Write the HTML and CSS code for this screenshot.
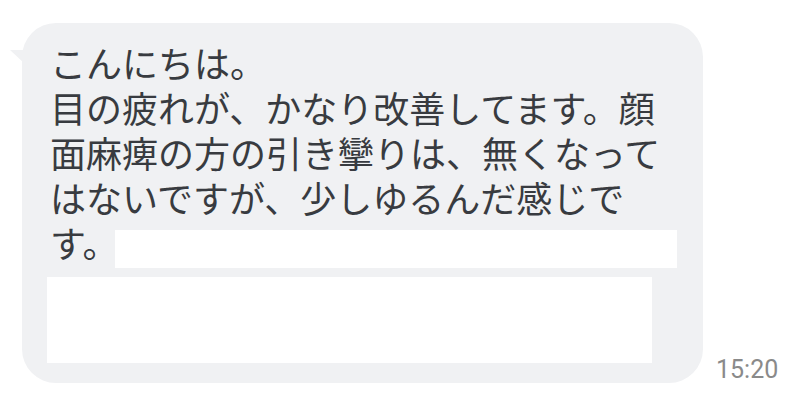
FILE: index.html
```html
<!DOCTYPE html>
<html lang="ja">
<head>
<meta charset="utf-8">
<link rel="stylesheet" href="styles.css">
</head>
<body>
<div class="row">
  <div class="bubble">
    <div class="line">こんにちは。</div>
    <div class="line">目の疲れが、かなり改善してます。顔</div>
    <div class="line">面麻痺の方の引き攣りは、無くなって</div>
    <div class="line">はないですが、少しゆるんだ感じで</div>
    <div class="line last">
      <span class="tail-text">す。</span>
      <div class="redact redact-a"></div>
    </div>
    <div class="redact redact-b"></div>
  </div>
  <div class="time">15:20</div>
</div>
</body>
</html>
```
FILE: styles.css
```css
html, body {
  margin: 0;
  padding: 0;
  background: #ffffff;
}
body {
  width: 800px;
  height: 400px;
  overflow: hidden;
}
.row {
  display: flex;
  align-items: flex-end;
  gap: 13px;
  padding: 23px 0 0 22px;
}
.bubble {
  position: relative;
  width: 681px;
  box-sizing: border-box;
  height: 360px;
  background: #f0f1f3;
  border-radius: 34px;
  padding: 17px 28px 20px 28px;
  font-family: "Noto Sans CJK JP", "Noto Sans", sans-serif;
  font-size: 36px;
  color: #383b40;
}
.bubble::before {
  content: "";
  position: absolute;
  left: -12px;
  top: 27px;
  width: 15px;
  height: 14px;
  background: #f0f1f3;
  clip-path: polygon(0 0, 100% 0, 100% 100%);
}
.line {
  height: 45px;
  line-height: 45px;
  white-space: nowrap;
}
.line.last {
  display: flex;
  align-items: flex-start;
}
.tail-text {
  flex: none;
  width: 72px;
}
.redact {
  background: #ffffff;
}
.redact-a {
  margin-left: -7px;
  margin-top: 10px;
  width: 562px;
  height: 38px;
  flex: none;
}
.redact-b {
  margin-top: 12px;
  margin-left: -3px;
  width: 605px;
  height: 86px;
}
.time {
  font-family: Roboto, "Liberation Sans", sans-serif;
  font-size: 25px;
  color: #8a8a8a;
  line-height: normal;
  margin-bottom: -1px;
}
```
